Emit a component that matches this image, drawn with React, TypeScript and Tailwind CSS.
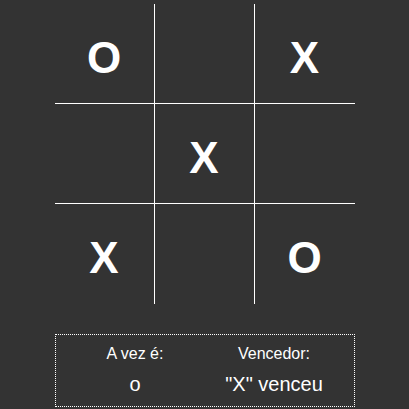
const board = ['O', '', 'X', '', 'X', '', 'X', '', 'O'];

const cellBorder = (i: number) => {
  const right = i % 3 < 2 ? 'border-r' : '';
  const bottom = i < 6 ? 'border-b' : '';
  return `${right} ${bottom}`;
};

const App = () => {
  return (
    <div
      className="w-full min-h-[409px] bg-[#333333] text-white pt-[4px]"
      style={{ fontFamily: '"Liberation Sans", Arial, sans-serif' }}
    >
      <div className="w-[300px] mx-auto grid grid-cols-3">
        {board.map((v, i) => (
          <div
            key={i}
            className={`h-[100px] flex items-center justify-center pt-[8px] border-white text-[44px] font-bold ${cellBorder(i)}`}
          >
            {v}
          </div>
        ))}
      </div>

      <div className="w-[300px] mx-auto mt-[30px] border border-dotted border-white px-[10px] py-[10px] grid grid-cols-2 gap-y-[10px] text-center leading-[1.15]">
        <div className="text-[16px]">A vez é:</div>
        <div className="text-[16px]">Vencedor:</div>
        <div className="text-[20px]">o</div>
        <div className="text-[20px]">"X" venceu</div>
      </div>
    </div>
  );
};

export default App;
